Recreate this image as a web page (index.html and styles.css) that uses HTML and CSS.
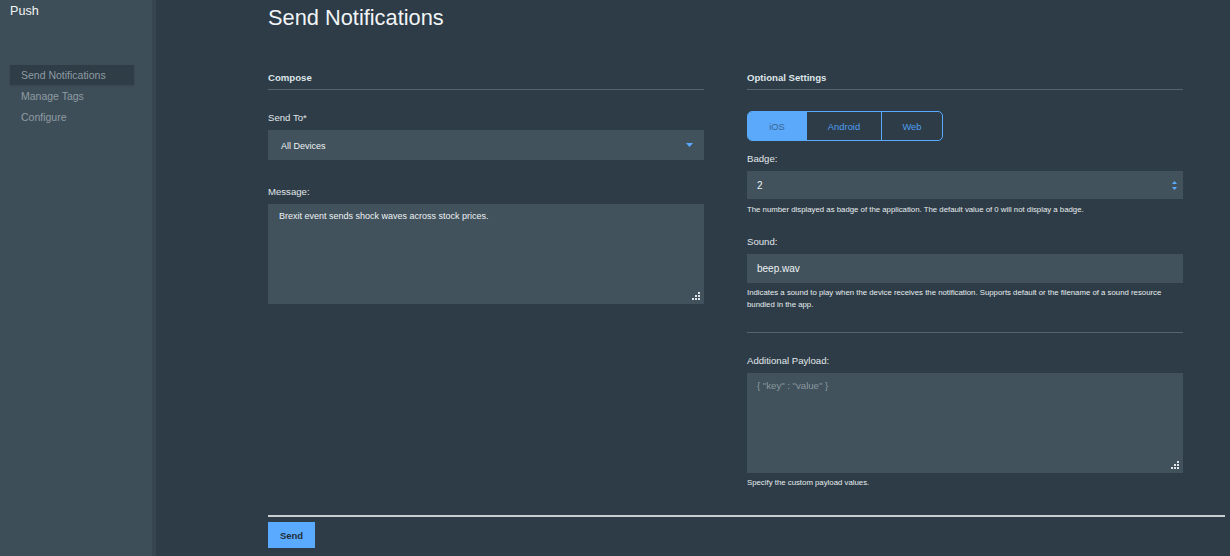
FILE: index.html
```html
<!DOCTYPE html>
<html lang="en">
<head>
<meta charset="utf-8">
<title>Push - Send Notifications</title>
<link rel="stylesheet" href="styles.css">
</head>
<body>
<div class="app">
  <aside class="sidebar">
    <div class="brand">Push</div>
    <nav class="nav">
      <a class="nav-item active">Send Notifications</a>
      <a class="nav-item">Manage Tags</a>
      <a class="nav-item">Configure</a>
    </nav>
  </aside>
  <main class="main">
    <h1 class="title">Send Notifications</h1>
    <div class="columns">
      <section class="col">
        <div class="section-head">Compose</div>
        <div class="label label-sendto">Send To*</div>
        <div class="select">
          <span>All Devices</span>
          <svg class="caret" width="7" height="4" viewBox="0 0 7 4"><path d="M0 0h7L3.5 4z" fill="#5aabff"/></svg>
        </div>
        <div class="label label-message">Message:</div>
        <div class="area-wrap">
          <textarea class="area msg">Brexit event sends shock waves across stock prices.</textarea>
          <svg class="grip" width="8" height="8" viewBox="0 0 8 8"><g fill="#dfe5e9"><rect x="6" y="0" width="2" height="2"/><rect x="3" y="3" width="2" height="2"/><rect x="6" y="3" width="2" height="2"/><rect x="0" y="6" width="2" height="2"/><rect x="3" y="6" width="2" height="2"/><rect x="6" y="6" width="2" height="2"/></g></svg>
        </div>
      </section>
      <section class="col">
        <div class="section-head">Optional Settings</div>
        <div class="segments">
          <div class="seg seg-ios active">iOS</div>
          <div class="seg seg-android">Android</div>
          <div class="seg seg-web">Web</div>
        </div>
        <div class="label label-badge">Badge:</div>
        <div class="input badge">
          <span>2</span>
          <svg class="spin" width="5" height="9" viewBox="0 0 5 9"><path d="M2.5 0L5 3H0z M0 6h5L2.5 9z" fill="#5aabff"/></svg>
        </div>
        <p class="help help-badge">The number displayed as badge of the application. The default value of 0 will not display a badge.</p>
        <div class="label label-sound">Sound:</div>
        <div class="input sound"><span>beep.wav</span></div>
        <p class="help help-sound">Indicates a sound to play when the device receives the notification. Supports default or the filename of a sound resource bundled in the app.</p>
        <hr class="divider">
        <div class="label label-payload">Additional Payload:</div>
        <div class="area-wrap">
          <textarea class="area payload" placeholder="{ &quot;key&quot; : &quot;value&quot; }"></textarea>
          <svg class="grip" width="8" height="8" viewBox="0 0 8 8"><g fill="#dfe5e9"><rect x="6" y="0" width="2" height="2"/><rect x="3" y="3" width="2" height="2"/><rect x="6" y="3" width="2" height="2"/><rect x="0" y="6" width="2" height="2"/><rect x="3" y="6" width="2" height="2"/><rect x="6" y="6" width="2" height="2"/></g></svg>
        </div>
        <p class="help help-payload">Specify the custom payload values.</p>
      </section>
    </div>
    <div class="footer">
      <button class="send">Send</button>
    </div>
  </main>
</div>
</body>
</html>
```

FILE: styles.css
```css
* { box-sizing: border-box; }
html, body { margin: 0; padding: 0; }
body {
  background: #2d3c46;
  font-family: "Liberation Sans", Arial, sans-serif;
  color: #e1e7eb;
}
.app {
  display: flex;
  min-height: 556px;
}
.sidebar {
  width: 156px;
  flex: 0 0 156px;
  background: #3e4e58;
  border-right: 4px solid #36454f;
  padding: 4px 0 0 10px;
}
.brand {
  font-size: 12.6px;
  line-height: 15px;
  color: #f2f5f7;
}
.nav {
  margin-top: 46px;
  display: flex;
  flex-direction: column;
  gap: 1px;
}
.nav-item {
  display: block;
  width: 124px;
  height: 20px;
  line-height: 20px;
  padding-left: 11px;
  font-size: 10.5px;
  color: #8e9ba3;
}
.nav-item.active {
  background: #2f3d47;
  box-shadow: 0 1px 2px rgba(0,0,0,0.15);
}
.main {
  flex: 1;
  padding: 0 5px 0 112px;
}
.title {
  margin: 5px 0 0;
  font-size: 21.8px;
  line-height: 26px;
  font-weight: normal;
  color: #f1f4f6;
}
.columns {
  margin-top: 41px;
  display: grid;
  grid-template-columns: 436px 436px;
  column-gap: 43px;
  align-items: start;
}
.col {
  display: flex;
  flex-direction: column;
}
.section-head {
  font-size: 9.6px;
  font-weight: bold;
  line-height: 12px;
  padding-bottom: 5px;
  border-bottom: 1px solid #56646e;
  color: #dfe5e9;
}
.label {
  font-size: 9.6px;
  line-height: 12px;
  margin-bottom: 6px;
  color: #e1e7eb;
}
.label-sendto { margin-top: 22px; }
.label-message { margin-top: 26px; }
.label-badge { margin-top: 12px; }
.label-sound { margin-top: 20px; }
.label-payload { margin-top: 22px; }

.select {
  height: 30px;
  background: #41525c;
  display: flex;
  align-items: center;
  justify-content: space-between;
  padding: 1px 11px 0 13px;
  font-size: 9px;
  color: #eef2f4;
}
.caret { display: block; margin-top: -2px; }

.area-wrap {
  position: relative;
  height: 100px;
}
.area {
  display: block;
  width: 100%;
  height: 100px;
  margin: 0;
  border: none;
  outline: none;
  resize: none;
  background: #41525c;
  font-family: "Liberation Sans", Arial, sans-serif;
  font-size: 9px;
  line-height: 12px;
  color: #eef2f4;
}
.area.msg { padding: 6px 11px; }
.area.payload { padding: 7px 10px; font-size: 9.6px; }
.area::placeholder { color: #8b989f; }
.grip {
  position: absolute;
  right: 4px;
  bottom: 4px;
  display: block;
}

.segments {
  margin-top: 21px;
  display: flex;
  width: 196px;
  height: 30px;
  border: 1px solid #5aabff;
  border-radius: 5px;
  overflow: hidden;
}
.seg {
  display: flex;
  align-items: center;
  justify-content: center;
  font-size: 9.4px;
  color: #4f9ff2;
}
.seg + .seg { border-left: 1px solid #5aabff; }
.seg-ios { width: 58px; }
.seg-android { width: 75px; }
.seg-web { flex: 1; }
.seg.active {
  background: #5aa9fb;
  color: #3a6590;
}

.input {
  background: #41525c;
  display: flex;
  align-items: center;
  justify-content: space-between;
  padding: 0 6px 0 10px;
  font-size: 10px;
  color: #eef2f4;
}
.input.badge { height: 28px; }
.input.sound { height: 29px; }
.spin { display: block; }

.help {
  margin: 0;
  font-size: 7.8px;
  line-height: 12px;
  color: #e8edf0;
}
.help-badge { margin-top: 5px; }
.help-sound { margin-top: 4px; }
.help-payload { margin-top: 4px; }

.divider {
  margin: 21px 0 0;
  border: none;
  border-top: 1px solid #56646e;
  height: 0;
}

.footer {
  margin-top: 26px;
  border-top: 2px solid #c9ced1;
  padding-top: 5px;
  padding-bottom: 8px;
}
.send {
  display: block;
  width: 47px;
  height: 26px;
  border: none;
  margin: 0;
  padding: 0;
  background: #5aabff;
  color: #1f2e3a;
  font-family: "Liberation Sans", Arial, sans-serif;
  font-size: 9.5px;
  font-weight: bold;
}
```
